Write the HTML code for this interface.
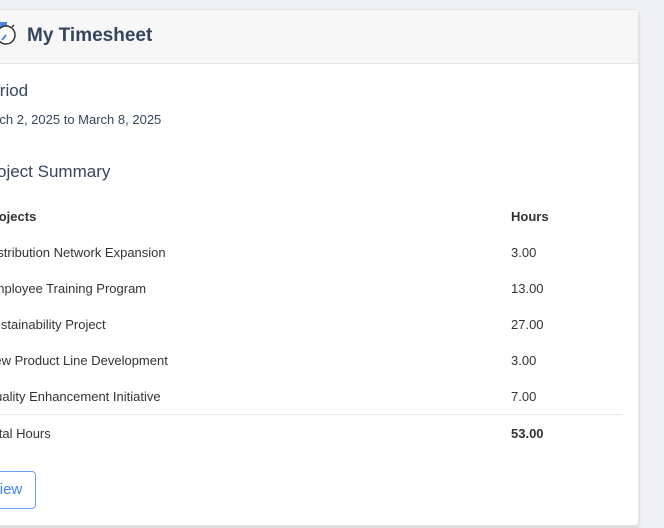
<!DOCTYPE html>
<html><head><style>
body{margin:0;width:664px;height:528px;background:#eff0f2;font-family:"Liberation Sans",sans-serif;position:relative;overflow:hidden;color:#333}
.card{position:absolute;left:-40px;top:9px;width:677px;height:515px;background:#fff;border:1px solid #e3e4e6;border-radius:4px;box-shadow:0 2px 3px rgba(0,0,0,.12)}
.hdr{position:absolute;left:0;top:0;right:0;height:53px;background:#f7f7f8;border-bottom:1px solid #e4e5e7}
.t{position:absolute;white-space:nowrap}
.h{color:#34465f}
.r{font-size:13px;color:#333}
</style></head><body>
<div class="card"><div class="hdr"></div></div>
<svg class="t" style="left:-9px;top:19px" width="28" height="28" viewBox="0 0 28 28">
<rect x="2" y="3" width="14" height="5" fill="#4a86e8"/>
<circle cx="15" cy="16" r="9" fill="#fff" stroke="#333" stroke-width="1.5"/>
<line x1="15" y1="16" x2="11" y2="21" stroke="#4a86e8" stroke-width="2"/>
<line x1="21" y1="8" x2="23" y2="6" stroke="#333" stroke-width="1.5"/>
</svg>
<div class="t h" style="left:27px;top:25px;font-size:19px;font-weight:bold">My Timesheet</div>
<div class="t h" style="left:-21px;top:81px;font-size:17px">Period</div>
<div class="t h" style="left:-23px;top:112px;font-size:13px">March 2, 2025 to March 8, 2025</div>
<div class="t h" style="left:-20px;top:162px;font-size:17px">Project Summary</div>
<div class="t r" style="left:-15px;top:209px;font-weight:bold">Projects</div>
<div class="t r" style="left:511px;top:209px;font-weight:bold">Hours</div>
<div class="t r" style="left:-15px;top:245px">Distribution Network Expansion</div><div class="t r" style="left:511px;top:245px">3.00</div>
<div class="t r" style="left:-15px;top:281px">Employee Training Program</div><div class="t r" style="left:511px;top:281px">13.00</div>
<div class="t r" style="left:-15px;top:317px">Sustainability Project</div><div class="t r" style="left:511px;top:317px">27.00</div>
<div class="t r" style="left:-15px;top:353px">New Product Line Development</div><div class="t r" style="left:511px;top:353px">3.00</div>
<div class="t r" style="left:-15px;top:389px">Quality Enhancement Initiative</div><div class="t r" style="left:511px;top:389px">7.00</div>
<div class="t" style="left:0;top:414px;width:622px;height:1px;background:#e8e8e8"></div>
<div class="t r" style="left:-15px;top:426px">Total Hours</div><div class="t r" style="left:511px;top:426px;font-weight:bold">53.00</div>
<div class="t" style="left:-30px;top:471px;width:64px;height:36px;border:1px solid #6a9ff5;border-radius:4px"></div>
<div class="t" style="left:-10px;top:481px;font-size:15px;color:#3d85f0">View</div>
</body></html>
